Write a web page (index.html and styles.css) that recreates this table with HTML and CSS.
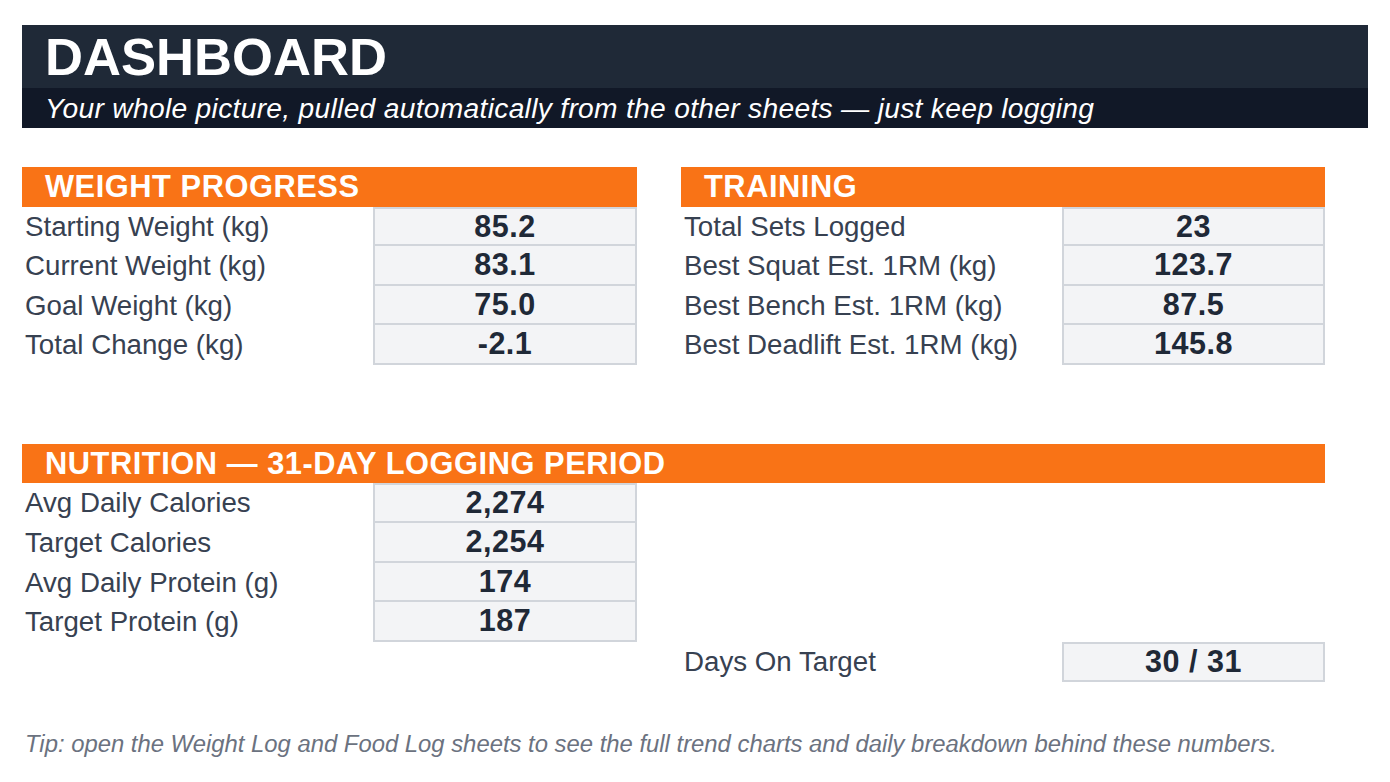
FILE: index.html
```html
<!DOCTYPE html>
<html lang="en">
<head>
<meta charset="utf-8">
<title>Dashboard</title>
<link rel="stylesheet" href="styles.css">
</head>
<body>
<div class="sheet">
  <header class="banner">
    <h1 class="title">DASHBOARD</h1>
    <p class="subtitle">Your whole picture, pulled automatically from the other sheets — just keep logging</p>
  </header>

  <div class="top">
    <section class="panel panel-weight">
      <div class="section-head">WEIGHT PROGRESS</div>
      <div class="row"><span class="label">Starting Weight (kg)</span><span class="value">85.2</span></div>
      <div class="row"><span class="label">Current Weight (kg)</span><span class="value">83.1</span></div>
      <div class="row"><span class="label">Goal Weight (kg)</span><span class="value">75.0</span></div>
      <div class="row"><span class="label">Total Change (kg)</span><span class="value">-2.1</span></div>
    </section>
    <section class="panel panel-training">
      <div class="section-head">TRAINING</div>
      <div class="row"><span class="label">Total Sets Logged</span><span class="value">23</span></div>
      <div class="row"><span class="label">Best Squat Est. 1RM (kg)</span><span class="value">123.7</span></div>
      <div class="row"><span class="label">Best Bench Est. 1RM (kg)</span><span class="value">87.5</span></div>
      <div class="row"><span class="label">Best Deadlift Est. 1RM (kg)</span><span class="value">145.8</span></div>
    </section>
  </div>

  <section class="panel panel-nutrition">
    <div class="section-head">NUTRITION — 31-DAY LOGGING PERIOD</div>
    <div class="row"><span class="label">Avg Daily Calories</span><span class="value">2,274</span></div>
    <div class="row"><span class="label">Target Calories</span><span class="value">2,254</span></div>
    <div class="row"><span class="label">Avg Daily Protein (g)</span><span class="value">174</span></div>
    <div class="row"><span class="label">Target Protein (g)</span><span class="value">187</span></div>
    <div class="row row-days"><span class="label">Days On Target</span><span class="value value-solo">30 / 31</span></div>
  </section>

  <p class="tip">Tip: open the Weight Log and Food Log sheets to see the full trend charts and daily breakdown behind these numbers.</p>
</div>
</body>
</html>
```
FILE: styles.css
```css
* { box-sizing: border-box; }

body {
  margin: 0;
  background: #ffffff;
  font-family: "Liberation Sans", Arial, sans-serif;
}

.sheet {
  padding: 25px 0 0 22px;
  width: 1368px;
}

.banner {
  background: #1f2937;
}

.title {
  margin: 0;
  height: 63px;
  line-height: 63px;
  padding-left: 23px;
  font-size: 52.6px;
  font-weight: bold;
  color: #ffffff;
}

.subtitle {
  margin: 0;
  height: 40px;
  line-height: 40px;
  padding-left: 23px;
  background: #111827;
  color: #ffffff;
  font-style: italic;
  font-size: 28.2px;
  letter-spacing: 0.3px;
  white-space: nowrap;
}

.top {
  display: flex;
  gap: 44px;
  margin-top: 39px;
}

.panel-weight { --cols: 351px 264px; width: 615px; }
.panel-training { --cols: 381px 263px; width: 644px; }
.panel-nutrition {
  --cols: 351px 264px 44px 381px 263px;
  width: 1303px;
  margin-top: 79px;
}

.section-head {
  height: 39.5px;
  line-height: 39.5px;
  padding-left: 23px;
  background: #f97316;
  color: #ffffff;
  font-weight: bold;
  font-size: 30.8px;
  letter-spacing: 0.55px;
  white-space: nowrap;
}

.row {
  display: grid;
  grid-template-columns: var(--cols);
  height: 39.6px;
}

.label {
  padding-left: 3px;
  line-height: 39.6px;
  font-size: 27.7px;
  color: #374151;
  white-space: nowrap;
}

.value {
  background: #f3f4f6;
  border: 2px solid #d1d5db;
  border-top: none;
  text-align: center;
  font-weight: bold;
  font-size: 30.5px;
  letter-spacing: 0.5px;
  line-height: 37px;
  color: #1f2937;
}

.section-head + .row .value {
  border-top: 2px solid #d1d5db;
  line-height: 35px;
}

.row-days .label { grid-column: 4; }
.row-days .value { grid-column: 5; }

.value-solo {
  border-top: 2px solid #d1d5db;
  line-height: 35px;
}

.row-days { height: 40px; }

.tip {
  margin: 42px 0 0 0;
  padding-left: 3px;
  line-height: 40px;
  font-size: 23.85px;
  font-style: italic;
  color: #6b7280;
  white-space: nowrap;
}
```
